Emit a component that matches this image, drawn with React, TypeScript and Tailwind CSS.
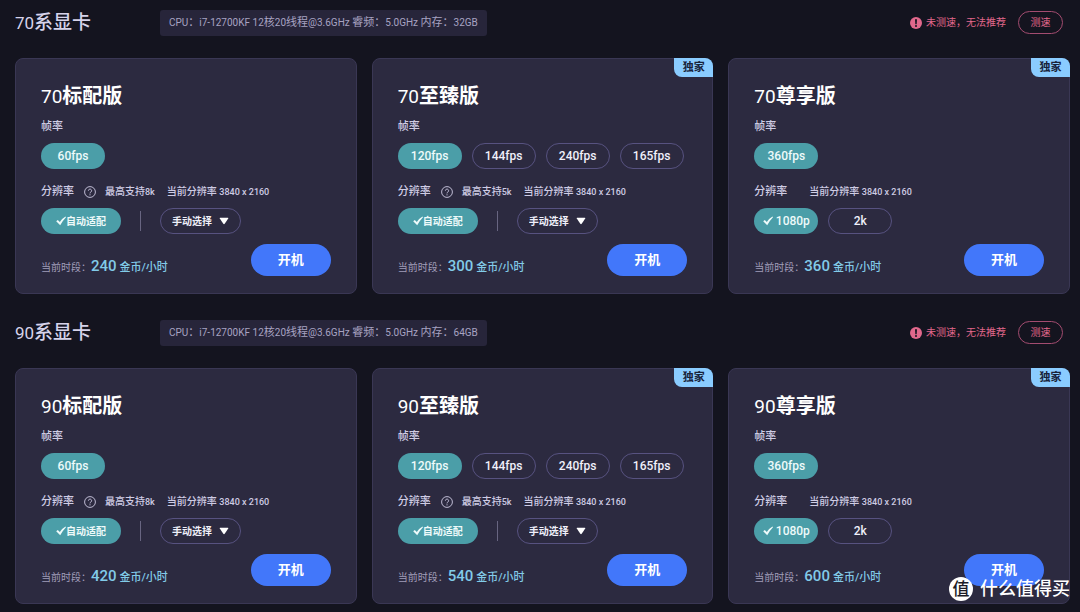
import { useState } from 'react'
import clsx from 'clsx'

interface Plan {
  name: string
  fps: string[]
  maxResolution?: string
  fixedResolutions?: string[]
  price: number
  exclusive?: boolean
}

interface Series {
  id: string
  memory: string
  plans: Plan[]
}

const seriesList: Series[] = [
  {
    id: '70',
    memory: '32GB',
    plans: [
      { name: '标配版', fps: ['60fps'], maxResolution: '8k', price: 240 },
      { name: '至臻版', fps: ['120fps', '144fps', '240fps', '165fps'], maxResolution: '5k', price: 300, exclusive: true },
      { name: '尊享版', fps: ['360fps'], fixedResolutions: ['1080p', '2k'], price: 360, exclusive: true },
    ],
  },
  {
    id: '90',
    memory: '64GB',
    plans: [
      { name: '标配版', fps: ['60fps'], maxResolution: '8k', price: 420 },
      { name: '至臻版', fps: ['120fps', '144fps', '240fps', '165fps'], maxResolution: '5k', price: 540, exclusive: true },
      { name: '尊享版', fps: ['360fps'], fixedResolutions: ['1080p', '2k'], price: 600, exclusive: true },
    ],
  },
]

function CheckIcon() {
  return (
    <svg viewBox="0 0 10 10" className="size-[10px] shrink-0" fill="currentColor" aria-hidden="true">
      <path d="M0.2 5.3 1.8 4 3.8 6 Q6 2.6 9.5 0.6 L10 1.2 Q6.9 4.4 4.2 9.2 Z" />
    </svg>
  )
}

function HelpIcon() {
  return (
    <svg viewBox="0 0 12 12" className="size-3 shrink-0" fill="none" stroke="currentColor" aria-hidden="true">
      <circle cx="6" cy="6" r="5.4" strokeWidth="0.9" />
      <path d="M4.4 4.7a1.6 1.6 0 1 1 2.5 1.3C6.3 6.4 6 6.7 6 7.4" strokeWidth="0.9" />
      <circle cx="6" cy="8.8" r="0.6" fill="currentColor" stroke="none" />
    </svg>
  )
}

function WarningIcon() {
  return (
    <svg viewBox="0 0 12 12" className="size-3 shrink-0" aria-hidden="true">
      <circle cx="6" cy="6" r="6" fill="#e2688c" />
      <path d="M5 2.2h2L6.7 7.2H5.3z" fill="#14141f" />
      <circle cx="6" cy="8.9" r="1" fill="#14141f" />
    </svg>
  )
}

// 英文和数字比中文小一号
function SpecText({ text }: { text: string }) {
  return (
    <>
      {text.split(/([ -~]+)/).map((part, index) => (
        <span key={index} className={index % 2 ? 'text-[10px] leading-none' : 'leading-none'}>
          {part}
        </span>
      ))}
    </>
  )
}

function Pill({ label, active, checked, onClick }: {
  label: string
  active: boolean
  checked?: boolean
  onClick: () => void
}) {
  return (
    <button
      type="button"
      aria-pressed={active}
      onClick={onClick}
      className={clsx(
        'flex h-[26px] w-16 items-center justify-center gap-[3px] rounded-full text-[12px] font-medium',
        active ? 'bg-[#4b9ea8] text-[#eefafa]' : 'border border-[#575280] text-[#f0f0fa]'
      )}
    >
      {checked && <CheckIcon />}
      {label}
    </button>
  )
}

function PlanCard({ series, plan }: { series: string; plan: Plan }) {
  const [fps, setFps] = useState(plan.fps[0])
  const [resolution, setResolution] = useState(plan.fixedResolutions ? plan.fixedResolutions[0] : 'auto')

  return (
    <article className="relative rounded-lg border border-[#3a3754] bg-[#2c2a40] px-[25px] pt-[23px] pb-[17px]">
      {plan.exclusive && (
        <span className="absolute -top-px -right-px h-[19px] w-[39px] rounded-tr-lg rounded-bl-lg bg-[#8accff] text-center text-[11px] leading-5 font-bold text-[#18233a]">
          独家
        </span>
      )}
      <h3 className="h-7 text-[20px] leading-[29px] font-bold text-white">
        <span className="text-[19px] leading-none font-normal">{series}</span>
        {plan.name}
      </h3>

      <p className="mt-[9px] text-[11px] leading-4 font-medium text-[#cfcce4]">帧率</p>
      <div className="mt-2 flex gap-[10px]">
        {plan.fps.map((item) => (
          <Pill key={item} label={item} active={item === fps} onClick={() => setFps(item)} />
        ))}
      </div>

      <div className="mt-[15px] flex h-4 items-center text-[10px] leading-4 font-medium text-[#cfcce4]">
        <span className="text-[11px]">分辨率</span>
        {plan.maxResolution && (
          <>
            <span className="ml-[10px]"><HelpIcon /></span>
            <span className="ml-[9px]">
              最高支持<span className="text-[9px] leading-none">{plan.maxResolution}</span>
            </span>
          </>
        )}
        <span className={plan.maxResolution ? 'ml-3' : 'ml-[22px]'}>
          当前分辨率 <span className="text-[9px] leading-none">3840 x 2160</span>
        </span>
      </div>

      {plan.fixedResolutions ? (
        <div className="mt-2 flex gap-[10px]">
          {plan.fixedResolutions.map((item) => (
            <Pill
              key={item}
              label={item}
              active={item === resolution}
              checked={item === resolution}
              onClick={() => setResolution(item)}
            />
          ))}
        </div>
      ) : (
        <div className="mt-2 flex items-center gap-[19px]">
          <button
            type="button"
            aria-pressed={resolution === 'auto'}
            onClick={() => setResolution('auto')}
            className="flex h-[26px] w-20 items-center justify-center rounded-full bg-[#4b9ea8] text-[10px] font-bold text-[#eefafa]"
          >
            <CheckIcon />
            自动适配
          </button>
          <span className="h-5 w-px bg-[#686581]" />
          <div className="relative flex">
            <select
              aria-label="手动选择"
              className="h-[26px] w-[81px] appearance-none rounded-full border border-[#575280] bg-transparent pl-[11px] text-[10px] font-bold text-[#f0f0fa]"
            >
              <option>手动选择</option>
            </select>
            <svg
              viewBox="0 0 10 8"
              className="pointer-events-none absolute top-[9px] right-3 h-2 w-[10px]"
              fill="#fff"
              aria-hidden="true"
            >
              <path d="M1.2 0.8h7.6q.8 0 .4.7L5.7 6.8q-.7.9-1.4 0L.8 1.5Q.4.8 1.2.8z" />
            </svg>
          </div>
        </div>
      )}

      <div className="mt-[10px] flex items-end justify-between">
        <p className="flex items-baseline text-[10px] leading-4 text-[#a19db9]">
          当前时段：
          <span className="text-[15px] font-medium text-[#82cbe8]">{plan.price}</span>
          <span className="ml-[3px] text-[11px] font-medium text-[#82cbe8]">金币/小时</span>
        </p>
        <button type="button" className="h-8 w-20 rounded-full bg-[#4277fa] text-[13px] font-bold text-white">
          开机
        </button>
      </div>
    </article>
  )
}

function SeriesSection({ series }: { series: Series }) {
  return (
    <section>
      <header className="flex h-[45px] items-center">
        <h2 className="w-[145px] text-[19px] leading-[28px] font-medium text-[#d6d3ea]">
          <span className="text-[17px] leading-none font-normal">{series.id}</span>系显卡
        </h2>
        <p className="h-[26px] rounded-[3px] bg-[#27253a] px-[9px] text-[11px] leading-[26px] text-[#a7a3c2]">
          <SpecText text={`CPU：i7-12700KF 12核20线程@3.6GHz 睿频：5.0GHz 内存：${series.memory}`} />
        </p>
        <div className="mr-[7px] ml-auto flex items-center text-[10px] text-[#e2688c]">
          <WarningIcon />
          <span className="ml-1">未测速，无法推荐</span>
          <button type="button" className="ml-3 h-[23px] w-[45px] rounded-full border border-[#a34c70]">
            测速
          </button>
        </div>
      </header>
      <div className="mt-[13px] grid grid-cols-3 gap-[15px]">
        {series.plans.map((plan) => (
          <PlanCard key={plan.name} series={series.id} plan={plan} />
        ))}
      </div>
    </section>
  )
}

export default function App() {
  return (
    <main className="relative flex min-h-screen flex-col gap-4 bg-[#14141f] pr-[10px] pl-[15px] font-[Roboto,'Noto_Sans_CJK_SC',sans-serif]">
      {seriesList.map((series) => (
        <SeriesSection key={series.id} series={series} />
      ))}
      <div className="pointer-events-none absolute right-[10px] bottom-[11px] flex items-center gap-[7px] text-white">
        <span className="flex size-6 items-center justify-center rounded-full bg-white text-[17px] leading-6 font-medium text-[#1c1c28]">
          值
        </span>
        <span className="text-[18px] leading-6 font-medium">什么值得买</span>
      </div>
    </main>
  )
}
